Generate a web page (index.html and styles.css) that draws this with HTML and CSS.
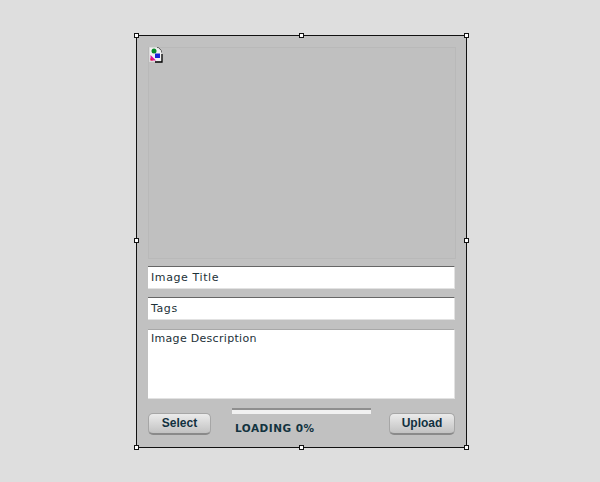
FILE: index.html
```html
<!DOCTYPE html>
<html lang="en">
<head>
  <meta charset="UTF-8" />
  <title>Image Upload</title>
  <link rel="stylesheet" href="styles.css">
</head>
<body>

  <div class="panel">
    <!-- selection handles -->
    <span class="handle h-tl"></span>
    <span class="handle h-tc"></span>
    <span class="handle h-tr"></span>
    <span class="handle h-ml"></span>
    <span class="handle h-mr"></span>
    <span class="handle h-bl"></span>
    <span class="handle h-bc"></span>
    <span class="handle h-br"></span>

    <!-- preview -->
    <div class="preview">
      <svg class="broken" width="15" height="16" viewBox="0 0 15 16">
        <path d="M1.5 .5H9L13.5 4V14.5H1.5Z" fill="#f2f2f2" stroke="#dcdcdc"/>
        <path d="M9 .5H10.5L13.5 3.5V5.5" fill="none" stroke="#666"/>
        <path d="M14 7V15H7" fill="none" stroke="#000" stroke-width="1.3"/>
        <circle cx="6" cy="4" r="2.5" fill="#0a8a2a"/>
        <path d="M2.5 8L8 13.5H2.5Z" fill="#e0109a"/>
        <path d="M2.5 11L5 13.5H2.5Z" fill="#d8202a"/>
        <rect x="7" y="6.5" width="5" height="4.5" fill="#1a22d8"/>
      </svg>
    </div>

    <!-- fields -->
    <div class="field field-title">Image Title</div>
    <div class="field">Tags</div>
    <div class="field field-area">Image Description</div>

    <!-- bottom row -->
    <div class="actions">
      <div class="btn btn-select">Select</div>
      <div class="progress">
        <div class="progress-bar"></div>
        <div class="progress-label">LOADING 0%</div>
      </div>
      <div class="btn btn-upload">Upload</div>
    </div>
  </div>

</body>
</html>
```

FILE: styles.css
```css
body {
  margin: 0;
  height: 482px;
  overflow: hidden;
  background-color: #dedede;
  font-family: "DejaVu Sans", sans-serif;
}

/* Panel */
.panel {
  position: relative;
  box-sizing: border-box;
  width: 331px;
  height: 413px;
  margin: 35px 0 0 136px;
  padding: 11px 11px 0 11px;
  background-color: #c1c1c1;
  border: 1px solid #111;
}

/* Handles */
.handle {
  position: absolute;
  width: 3px;
  height: 3px;
  background-color: #fff;
  border: 1px solid #111;
}

.h-tl { top: -3px; left: -3px; }
.h-tc { top: -3px; left: 162px; }
.h-tr { top: -3px; right: -3px; }
.h-ml { top: 202px; left: -3px; }
.h-mr { top: 202px; right: -3px; }
.h-bl { bottom: -3px; left: -3px; }
.h-bc { bottom: -3px; left: 162px; }
.h-br { bottom: -3px; right: -3px; }

/* Preview */
.preview {
  box-sizing: border-box;
  height: 212px;
  margin-right: -1px;
  background-color: #c0c0c0;
  border: 1px solid #b9b9b9;
}

.broken {
  display: block;
  margin: -1px 0 0 -1px;
}

/* Fields */
.field {
  box-sizing: border-box;
  height: 23px;
  margin-top: 8px;
  padding: 4px 0 0 3px;
  background-color: #fff;
  border-top: 1px solid #666;
  border-right: 1px solid #e2e2e2;
  border-bottom: 1px solid #e2e2e2;
  font-size: 11px;
  line-height: 14px;
  letter-spacing: 0.6px;
  color: #1c3138;
}

.field-title {
  margin-top: 7px;
}

.field-area {
  height: 70px;
  margin-top: 9px;
  padding: 2px 0 0 3px;
  border-top-color: #a8a8a8;
  letter-spacing: 0.3px;
}

/* Bottom row */
.actions {
  display: flex;
  margin-top: 8px;
}

.btn {
  box-sizing: border-box;
  height: 22px;
  margin-top: 6px;
  border-radius: 5px;
  border: 1px solid #a6a6a6;
  border-bottom: 2px solid #8a8a8a;
  background: linear-gradient(#ebebeb, #c2c2c2);
  font-family: "Liberation Sans", sans-serif;
  font-size: 12px;
  font-weight: bold;
  line-height: 18px;
  text-align: center;
  color: #12313f;
}

.btn-select { width: 63px; }
.btn-upload { width: 66px; }

.progress {
  width: 139px;
  margin: 0 auto 0 21px;
}

.progress-bar {
  box-sizing: border-box;
  height: 6px;
  margin-top: 1px;
  background-color: #f1f1f1;
  border-top: 2px solid #8f8f8f;
}

.progress-label {
  margin: 7px 0 0 3px;
  font-size: 10.5px;
  font-weight: bold;
  line-height: 14px;
  letter-spacing: 0.5px;
  color: #12333f;
}
```
